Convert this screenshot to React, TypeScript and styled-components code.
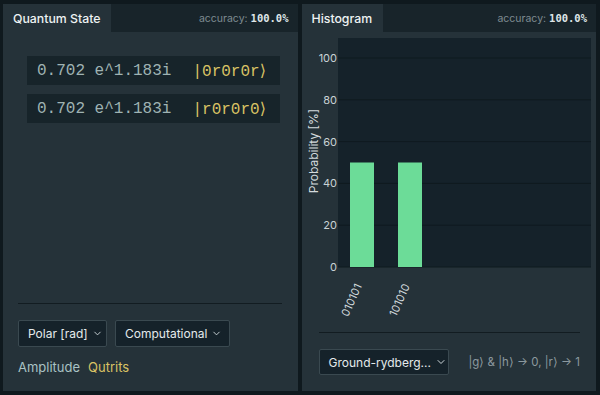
import React from "react";
import styled, { createGlobalStyle } from "styled-components";
import { ChevronDown } from "lucide-react";

const Global = createGlobalStyle`
  html, body {
    margin: 0;
    padding: 0;
    background: #0f191e;
  }
  body {
    font-family: Inter, "Noto Sans", sans-serif;
  }
`;

const Page = styled.div`
  display: flex;
  gap: 4px;
  padding: 4px 4px 4px 3px;
  height: 395px;
  box-sizing: border-box;
  background: #0f191e;
`;

const Panel = styled.section`
  flex: 1;
  display: flex;
  flex-direction: column;
  background: #253239;
  min-width: 0;
`;

const Header = styled.div`
  display: flex;
  align-items: stretch;
  height: 28px;
  background: #18242a;
  padding-right: 9px;
`;

const Tab = styled.div`
  display: flex;
  align-items: center;
  padding: 0 11px 0 10px;
  background: #253239;
  color: #eef2f3;
  font-size: 12.3px;
  font-weight: 500;
`;

const Accuracy = styled.div`
  margin-left: auto;
  display: flex;
  align-items: center;
  gap: 3px;
  font-size: 10.5px;
  color: #7e8b91;
`;

const AccValue = styled.span`
  font-family: "DejaVu Sans Mono", "Liberation Mono", monospace;
  font-weight: 700;
  font-size: 10.5px;
  color: #dfe6e8;
`;

const StateList = styled.div`
  display: flex;
  flex-direction: column;
  gap: 9px;
  padding: 24px 18px 0 24px;
`;

const StateRow = styled.div`
  display: flex;
  align-items: center;
  gap: 21px;
  height: 29px;
  padding-left: 10px;
  background: #17242a;
  font-family: "Liberation Mono", "DejaVu Sans Mono", monospace;
  font-size: 16px;
`;

const Amp = styled.span`
  color: #9fb3b3;
`;

const Ket = styled.span`
  color: #d9c264;
`;

const Bracket = styled.span`
  font-family: "DejaVu Sans", sans-serif;
`;

const Spacer = styled.div`
  flex: 1;
`;

const Footer = styled.div<{ $left: number }>`
  padding: 0 16px 16px ${({ $left }) => $left}px;
`;

const Rule = styled.div`
  height: 1px;
  background: #121c21;
`;

const Controls = styled.div<{ $top: number }>`
  display: flex;
  align-items: center;
  gap: 8px;
  margin-top: ${({ $top }) => $top}px;
`;

const Select = styled.div<{ $w: number; $h: number }>`
  display: flex;
  align-items: center;
  justify-content: space-between;
  box-sizing: border-box;
  width: ${({ $w }) => $w}px;
  height: ${({ $h }) => $h}px;
  padding: 0 9px 0 9px;
  background: #15222a;
  border: 1px solid #3a4950;
  border-radius: 2px;
  color: #e4eaec;
  font-size: 12px;
  white-space: nowrap;
  svg {
    color: #cfd8db;
    flex-shrink: 0;
    margin-left: 4px;
  }
`;

const Labels = styled.div`
  display: flex;
  gap: 8px;
  margin-top: 12px;
  font-size: 13px;
  line-height: 16px;
`;

const Label = styled.span<{ $active?: boolean }>`
  color: ${({ $active }) => ($active ? "#d9c264" : "#a9c3c4")};
`;

const Mapping = styled.span`
  margin-left: auto;
  color: #8c999f;
  font-size: 11.5px;
`;

const Chart = styled.svg`
  display: block;
  font-family: Inter, "Noto Sans", sans-serif;
`;

const states = [
  { amp: "0.702 e^1.183i", ket: "|0r0r0r" },
  { amp: "0.702 e^1.183i", ket: "|r0r0r0" },
];

const bars = [
  { label: "010101", value: 50 },
  { label: "101010", value: 50 },
];

const PLOT = { x: 36, y: 6, w: 253, bottom: 235 };
const scale = (v: number) => PLOT.bottom - v * 2.09;

const Histogram = () => (
  <Chart width={295} height={295}>
    <rect
      x={PLOT.x}
      y={PLOT.y}
      width={PLOT.w}
      height={PLOT.bottom - PLOT.y}
      fill="#15222a"
    />
    {[0, 20, 40, 60, 80, 100].map((t) => (
      <g key={t}>
        <line
          x1={PLOT.x}
          x2={PLOT.x + PLOT.w}
          y1={scale(t)}
          y2={scale(t)}
          stroke="#0f1a1f"
          strokeWidth={1}
        />
        <text
          x={PLOT.x - 1}
          y={scale(t) + 4}
          textAnchor="end"
          fontSize={11}
          fill="#c9d2d5"
        >
          {t}
        </text>
      </g>
    ))}
    <text
      transform="translate(16 119) rotate(-90)"
      textAnchor="middle"
      fontSize={12}
      fill="#d3dadd"
    >
      Probability [%]
    </text>
    {bars.map((b, i) => {
      const x = 48 + i * 48;
      return (
        <g key={b.label}>
          <rect
            x={x}
            y={scale(b.value)}
            width={24}
            height={PLOT.bottom - scale(b.value)}
            fill="#6cdc98"
          />
          <text
            transform={`translate(${x + 12} 254) rotate(-66)`}
            textAnchor="end"
            fontSize={11}
            fill="#d3dadd"
          >
            {b.label}
          </text>
        </g>
      );
    })}
  </Chart>
);

export default function App() {
  return (
    <>
      <Global />
      <Page>
        <Panel>
          <Header>
            <Tab>Quantum State</Tab>
            <Accuracy>
              accuracy: <AccValue>100.0%</AccValue>
            </Accuracy>
          </Header>
          <StateList>
            {states.map((s) => (
              <StateRow key={s.ket}>
                <Amp>{s.amp}</Amp>
                <Ket>
                  {s.ket}
                  <Bracket>⟩</Bracket>
                </Ket>
              </StateRow>
            ))}
          </StateList>
          <Spacer />
          <Footer $left={15}>
            <Rule />
            <Controls $top={16}>
              <Select $w={89} $h={27}>
                Polar [rad] <ChevronDown size={11} strokeWidth={2} />
              </Select>
              <Select $w={115} $h={27}>
                Computational <ChevronDown size={11} strokeWidth={2} />
              </Select>
            </Controls>
            <Labels>
              <Label>Amplitude</Label>
              <Label $active>Qutrits</Label>
            </Labels>
          </Footer>
        </Panel>
        <Panel>
          <Header>
            <Tab>Histogram</Tab>
            <Accuracy>
              accuracy: <AccValue>100.0%</AccValue>
            </Accuracy>
          </Header>
          <Histogram />
          <Spacer />
          <Footer $left={17}>
            <Rule />
            <Controls $top={16}>
              <Select $w={130} $h={26}>
                Ground-rydberg... <ChevronDown size={12} strokeWidth={2} />
              </Select>
              <Mapping>|g⟩ &amp; |h⟩ → 0, |r⟩ → 1</Mapping>
            </Controls>
          </Footer>
        </Panel>
      </Page>
    </>
  );
}
